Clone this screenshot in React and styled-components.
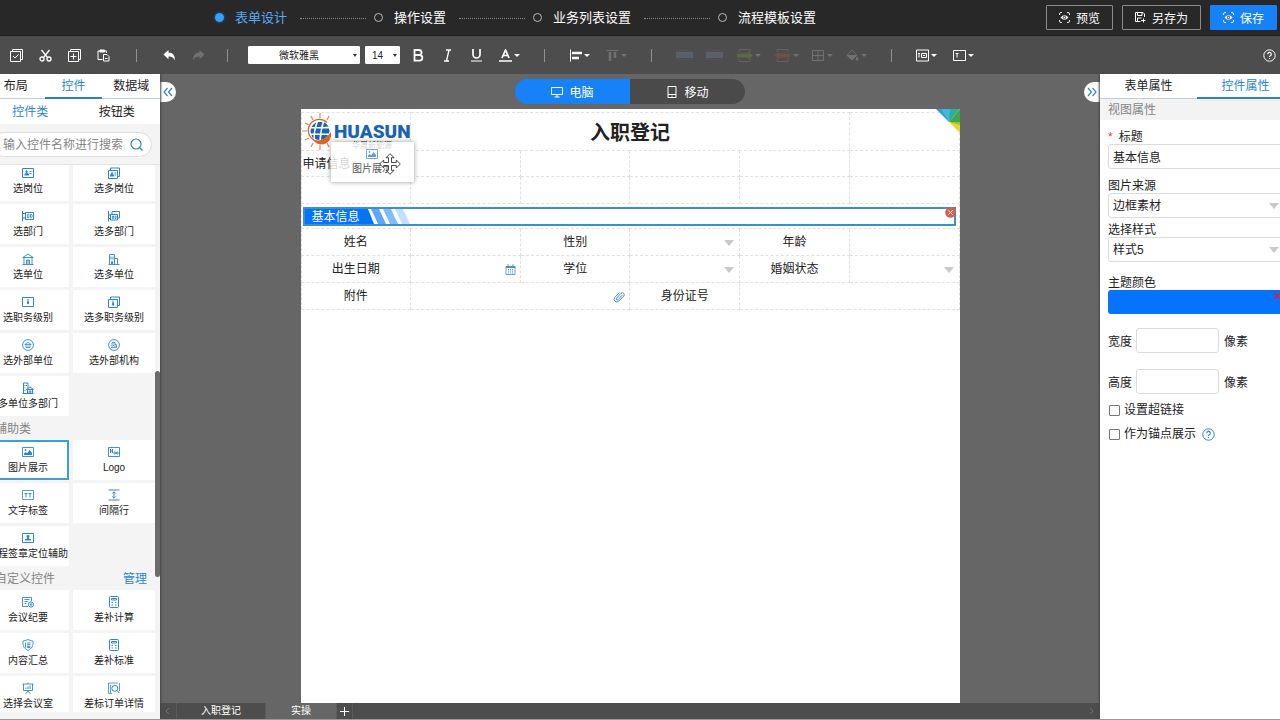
import styled, { createGlobalStyle, css } from "styled-components"

const GlobalStyle = createGlobalStyle`
  * {
    box-sizing: border-box;
  }

  body {
    margin: 0;
  }

  body, button, input, select {
    font-family: "Liberation Sans", "Noto Sans CJK SC", sans-serif;
    font-size: 12px;
    color: #222;
  }

  button {
    padding: 0;
    border: none;
    background: none;
    cursor: pointer;
  }

  svg {
    display: block;
    flex-shrink: 0;
  }
`

const Page = styled.div`
  height: 100vh;
  min-height: 480px;
  display: flex;
  flex-direction: column;
  overflow: hidden;
  background-color: #666;
  border-bottom: 1px solid #999;
`

/* ---------- top bar ---------- */

const TopBar = styled.header`
  height: 36px;
  flex-shrink: 0;
  display: flex;
  align-items: center;
  justify-content: space-between;
  padding: 0 3px 0 215px;
  background-color: #282828;
  border-bottom: 1px solid #1d1d1d;
`

const Steps = styled.nav`
  display: flex;
  align-items: center;
`

const Step = styled.a`
  display: flex;
  align-items: center;
  gap: 11px;
  font-size: 13px;
  line-height: 20px;
  white-space: nowrap;
  text-decoration: none;
  color: ${(props) => (props.$active ? "#57a9f5" : "#fff")};
`

const StepDot = styled.span`
  width: 9px;
  height: 9px;
  border-radius: 50%;
  border: 1px solid #bbb;
  ${(props) =>
    props.$active &&
    css`
      border-color: #37a0f8;
      background-color: #37a0f8;
      box-shadow: 0 0 3px #1b6fc0;
    `}
`

const StepLine = styled.span`
  width: 66px;
  margin: 2px 8px 0 13px;
  border-top: 1px dotted #8a8a8a;
`

const Actions = styled.div`
  display: flex;
  gap: 9px;
`

const ActionButton = styled.button`
  height: 25px;
  display: flex;
  align-items: center;
  gap: 6px;
  padding: 0 12px;
  border: 1px solid ${(props) => (props.$primary ? "#1782f7" : "#8c8c8c")};
  border-radius: 1px;
  background-color: ${(props) => (props.$primary ? "#1782f7" : "transparent")};
  color: #fff;
  white-space: nowrap;
`

/* ---------- toolbar ---------- */

const Toolbar = styled.div`
  height: 38px;
  flex-shrink: 0;
  display: flex;
  align-items: center;
  padding: 0 4px 0 10px;
  background-color: #4d4d4d;
`

const ToolGroup = styled.div`
  display: flex;
  align-items: center;
  gap: ${(props) => props.$gap || 16}px;
`

const Divider = styled.span`
  width: 1px;
  height: 13px;
  margin: 0 ${(props) => props.$gap || 24}px;
  background-color: #919191;
`

const Tool = styled.button`
  display: flex;
  align-items: center;
  gap: 2px;
  color: #fff;
  opacity: ${(props) => (props.$dim ? 0.2 : 1)};
`

const Caret = styled.span`
  border: 3px solid transparent;
  border-top-color: currentColor;
  border-bottom: none;
`

const FontBox = styled.div`
  position: relative;
  width: ${(props) => (props.$small ? 35 : 112)}px;
  margin-right: ${(props) => (props.$small ? 12 : 5)}px;
  margin-left: ${(props) => (props.$small ? 0 : -2)}px;

  &::after {
    content: "";
    position: absolute;
    top: 8px;
    right: 3px;
    border: 2px solid transparent;
    border-top: 3px solid #333;
    border-bottom: none;
    pointer-events: none;
  }

  select {
    appearance: none;
    display: block;
    width: 100%;
    height: 18px;
    padding: 0 10px 0 0;
    border: 1px solid #fff;
    border-radius: 1px;
    background-color: #fff;
    font-size: 10px;
    text-align: center;
    text-align-last: center;
  }
`

const HelpTool = styled(Tool)`
  margin-left: auto;
`

/* ---------- body ---------- */

const Body = styled.div`
  flex: 1;
  min-height: 0;
  display: grid;
  grid-template-columns: 160px 1fr 180px;
`

const Sidebar = styled.aside`
  position: relative;
  z-index: 1;
  min-height: 0;
  display: flex;
  justify-content: flex-end;
  overflow: hidden;
  background-color: #f4f4f4;
  box-shadow: 1px 0 2px #444;
`

const SidebarInner = styled.div`
  width: 173px;
  flex-shrink: 0;
  display: flex;
  flex-direction: column;
`

const Tabs = styled.div`
  height: 25px;
  flex-shrink: 0;
  display: flex;
  background-color: #fff;
  border-bottom: 1px solid #b9cfe0;
`

const Tab = styled.button`
  flex: 1;
  height: 25px;
  line-height: 24px;
  border-bottom: 2px solid ${(props) => (props.$active ? "#2d80c2" : "transparent")};
  color: ${(props) => (props.$active ? "#2d85cc" : "#222")};
`

const SubTabs = styled(Tabs)`
  border-bottom: none;
`

const SubTab = styled(Tab)`
  border-bottom: none;
  line-height: 27px;
`

const SearchArea = styled.div`
  height: 41px;
  flex-shrink: 0;
  padding: 8px 8px 0 4px;
  border-bottom: 1px solid #e2e2e2;
`

const SearchBox = styled.div`
  height: 25px;
  display: flex;
  align-items: center;
  padding: 0 8px 0 11px;
  border: 1px solid #ddd;
  border-radius: 13px;
  background-color: #fff;
  color: #2d85cc;

  input {
    flex: 1;
    min-width: 0;
    height: 20px;
    padding: 0;
    border: none;
    outline: none;
    background: none;
  }

  input::placeholder {
    color: #858585;
  }
`

const Controls = styled.div`
  flex: 1;
  min-height: 0;
  margin-bottom: 7px;
  overflow: hidden;
`

const Tiles = styled.div`
  display: grid;
  grid-template-columns: 82px 82px;
  gap: 3px 4px;

  ${Controls} > &:first-child {
    margin-top: -4px;
  }
`

const Tile = styled.button`
  height: 40px;
  display: flex;
  flex-direction: column;
  align-items: center;
  gap: 2px;
  padding: ${(props) => (props.$active ? 4 : 6)}px 0 0;
  border: ${(props) => (props.$active ? "2px solid #3c9fd6" : "none")};
  background-color: #fff;
  color: #2d85cc;

  span {
    font-size: 10px;
    line-height: 15px;
    white-space: nowrap;
    color: #222;
  }
`

const GroupHead = styled.div`
  height: 24px;
  display: flex;
  align-items: center;
  justify-content: space-between;
  padding: 0 13px 2px 8px;
  color: #858585;

  a {
    color: #2d85cc;
    text-decoration: none;
  }
`

const ScrollThumb = styled.span`
  position: absolute;
  top: 46%;
  right: 0;
  width: 5px;
  height: 32%;
  border-radius: 3px;
  background-color: #6b6b6b;
`

/* ---------- canvas ---------- */

const Canvas = styled.main`
  min-width: 0;
  min-height: 0;
  display: flex;
  flex-direction: column;
`

const CanvasHead = styled.div`
  height: 35px;
  flex-shrink: 0;
  display: flex;
  align-items: center;
  justify-content: space-between;
`

const Handle = styled.button`
  width: 16px;
  height: 20px;
  display: grid;
  place-items: center;
  background-color: #fff;
  border-radius: ${(props) => (props.$right ? "10px 0 0 10px" : "0 10px 10px 0")};
  color: #2d85cc;
`

const DeviceSwitch = styled.div`
  display: flex;
  border-radius: 13px;
  overflow: hidden;
`

const Device = styled.button`
  width: 115px;
  height: 25px;
  display: flex;
  align-items: center;
  justify-content: center;
  gap: 6px;
  background-color: ${(props) => (props.$active ? "#1782f7" : "#4a4a4a")};
  color: #fff;
`

const Sheet = styled.section`
  position: relative;
  flex: 1;
  width: 70%;
  min-width: 659px;
  margin: 0 auto;
  padding-top: 3px;
  background-color: #fff;
`

const Corner = styled.svg`
  position: absolute;
  top: 0;
  right: 0;
`

const FormTable = styled.table`
  width: 100%;
  table-layout: fixed;
  border-collapse: collapse;

  td, th {
    padding: 0;
    border: 1px dashed #e0e0e0;
    font-weight: 400;
    line-height: 16px;
    text-align: center;
    vertical-align: middle;
  }
`

const Row = styled.tr`
  height: ${(props) => props.$h || 27}px;
`

const FormTitle = styled.h1`
  margin: 0;
  padding-top: 2px;
  font-size: 20px;
  line-height: 24px;
`

const LeftText = styled.div`
  padding-left: 1px;
  text-align: left;
`

const CellIcon = styled.button`
  display: block;
  margin: 1px 4px 0 auto;
  color: #3f87cc;
`

const Banner = styled.div`
  position: relative;
  height: 19px;
  margin: 0 3px 0 1px;
  display: flex;
  border: 2px solid #3d8fc4;
  background-color: #fff;
  color: #fff;
`

const BannerText = styled.span`
  height: 15px;
  padding-left: 7px;
  width: 62px;
  line-height: 17px;
  text-align: left;
  white-space: nowrap;
  background-color: #0673ff;
`

const RemoveButton = styled.button`
  position: absolute;
  top: -2px;
  right: -2px;
`

const DragGhost = styled.div`
  position: absolute;
  top: 33px;
  left: 30px;
  width: 83px;
  height: 40px;
  display: flex;
  flex-direction: column;
  align-items: center;
  gap: 2px;
  padding-top: 6px;
  background-color: rgba(255, 255, 255, 0.8);
  box-shadow: 0 0 5px rgba(0, 0, 0, 0.4);
  font-size: 10px;
  line-height: 14px;
  color: #5f9fd6;

  span {
    color: #555;
  }
`

const MoveCursor = styled.svg`
  position: absolute;
  top: 11px;
  left: 48px;
`

const SheetTabs = styled.div`
  height: 16px;
  flex-shrink: 0;
  display: flex;
  background-color: #4d4d4d;
`

const SheetTab = styled.button`
  width: ${(props) => props.$w}px;
  height: 16px;
  display: flex;
  align-items: center;
  justify-content: center;
  border-right: 1px solid #5c5c5c;
  background-color: ${(props) => (props.$active ? "#666" : "#4d4d4d")};
  font-size: 10px;
  line-height: 16px;
  color: ${(props) => (props.$muted ? "#707070" : "#fff")};
  margin-left: ${(props) => (props.$end ? "auto" : 0)};
`

/* ---------- properties ---------- */

const Properties = styled(Sidebar)`
  justify-content: flex-start;
  background-color: #fff;
  box-shadow: -1px 0 2px #444;
`

const PropertiesInner = styled.div`
  width: 194px;
  flex-shrink: 0;
`

const SectionTitle = styled.h2`
  margin: 0;
  height: 21px;
  padding-left: 8px;
  background-color: #f3f3f3;
  font-size: 12px;
  font-weight: 400;
  line-height: 23px;
  color: #858585;
`

const Form = styled.form`
  padding: 8px;
`

const Field = styled.div`
  display: flex;
  flex-direction: column;
  margin-bottom: ${(props) => props.$mb}px;

  label {
    height: 16px;
    line-height: 18px;
  }
`

const Required = styled.i`
  margin-right: 6px;
  font-style: normal;
  color: #e0433c;
`

const inputStyle = css`
  appearance: none;
  display: block;
  width: 100%;
  height: 25px;
  padding: 0 4px;
  border: 1px solid #dcdcdc;
  border-radius: 3px;
  background-color: #fff;
  outline: none;
`

const Input = styled.input`
  ${inputStyle}
`

const SelectBox = styled.div`
  position: relative;

  select {
    ${inputStyle}
    ${(props) => props.$plain && "border: none; background: none;"}
  }

  &::after {
    content: "";
    position: absolute;
    top: 10px;
    right: ${(props) => (props.$plain ? 5 : 7)}px;
    border: 5px solid transparent;
    border-top: 6px solid #c9c9c9;
    border-bottom: none;
    pointer-events: none;
  }
`

const ColorBar = styled.button`
  height: 24px;
  display: flex;
  justify-content: flex-end;
  padding: 2px 5px;
  border-radius: 3px;
  background-color: #0673ff;
`

const SizeRows = styled.div`
  display: grid;
  gap: 16px;
  margin-bottom: 8px;
`

const SizeRow = styled.div`
  display: flex;
  align-items: center;
  gap: 4px;

  input {
    width: 83px;
    margin-right: 1px;
  }
`

const CheckRow = styled.div`
  display: flex;
  align-items: center;
  height: 16px;
  margin-bottom: 8px;

  label {
    display: flex;
    align-items: center;
    line-height: 16px;
  }

  input {
    appearance: none;
    width: 11px;
    height: 11px;
    margin: 0 4px 0 1px;
    border: 1px solid #777;
    border-radius: 1px;
  }
`

const HelpButton = styled.button`
  margin-left: 6px;
  color: #2d85cc;
`

/* ---------- icons ---------- */

const Icon = ({ children, size = 12, sw = 1 }) => (
  <svg
    width={size}
    height={size}
    viewBox={`0 0 ${size} ${size}`}
    fill="none"
    stroke="currentColor"
    strokeWidth={sw}
    aria-hidden="true"
  >
    {children}
  </svg>
)

const icons = {
  post: <><path d="M.5 1.500h11v9H.5zM7.500 4.500h2M7.500 6.500h2" /><path d="M4.500 3l1.300 1.500L5.300 6l1.700.7V8.500H2.500V6.700L4 6l-.6-1.500z" fill="currentColor" stroke="none" /></>,
  posts: <><path d="M.5 3.500h9v8h-9zM2.500 3V1h9v8.500H10M6.500 6h1.500M6.500 8h1.500" /><path d="M4 4.800l1 1.300-.3 1 1.300.7v1.700H2V7.800l1.300-.7-.3-1z" fill="currentColor" stroke="none" /></>,
  dept: <><path d="M.5 1v10.500M.5 3.500h3M3.500 2.500h8v7h-8zM.5 8h3" /><path d="M5.500 4.500h1.500v3H5.500zM8.500 4.500h1.500v3H8.500z" strokeWidth=".8" /></>,
  depts: <><path d="M.5 1v10.500M.5 5h2M2.500 4.500h7v5.500h-7zM.5 8.500h2M4 4V1.500h7.500v6.500H10" /><path d="M4.500 6h1v2.500h-1zM7 6h1v2.500H7z" strokeWidth=".8" /></>,
  unit: <path d="M.8 4.500L6 1l5.200 3.500zM2 4.500V11M10 4.500V11M.5 11.500h11M4.500 11V7h3v4M6 7v4" strokeWidth=".9" />,
  units: <path d="M1.500 11V1.500h5V11M6.500 5.500h3V11M.5 11.500h11M3 3.500v3M5 3.500v3M3.500 11V8.500h1V11" strokeWidth=".9" />,
  level: <><path d="M.5 1.500h11v9H.5z" /><path d="M5.300 3h1.400L6.400 4.200l.9 3L6 8.500 4.700 7.200l.9-3z" fill="currentColor" stroke="none" /></>,
  levels: <><path d="M.5 3.500h9v8h-9zM2.500 3V1h9v8.500H10" /><path d="M4.300 4.800h1.400L5.400 6l.9 2.500L5 10 3.700 8.500 4.600 6z" fill="currentColor" stroke="none" /></>,
  outUnit: <><circle cx="6" cy="6" r="5.400" strokeWidth=".9" /><path d="M2.800 5.500L6 3.300l3.200 2.200zM4 5.500v3h4v-3M6 6.500v2" strokeWidth=".8" /></>,
  outOrg: <><circle cx="6" cy="6" r="5.400" strokeWidth=".9" /><path d="M4 8.500v-5h3v5M7 5.500h1.500v3M3.300 8.600h5.600M5 5h1M5 6.500h1" strokeWidth=".8" /></>,
  multi: <><path d="M1.500 11V1h4.500V6M.5 11.500h11M3 3v1M4.500 3v1M3 5.500v1M3 8v1" /><path d="M4.500 7.500L8 5 11.500 7.500zM5.500 8v3M10.500 8v3M7.200 11V9h1.600v2" /></>,
  image: <><path d="M.5 1.500h11v9H.5z" strokeWidth=".9" /><path d="M2 9V7.500L3.800 6l1.400 1.200L7.500 4l2.500 3v2z" fill="currentColor" stroke="none" /><circle cx="3.500" cy="4" r=".9" fill="currentColor" stroke="none" /></>,
  logo: <><path d="M.5 1.500h11v9H.5z" strokeWidth=".9" /><path d="M2.500 3v4M2.500 5h2M4.500 3v4" /><circle cx="6.800" cy="7" r="1" /><circle cx="9.300" cy="7" r="1" /></>,
  text: <><path d="M.5 1.500h11v9H.5z" strokeWidth=".8" /><path d="M2.500 4.500h3M4 4.500v4M6.500 4.500h3M8 4.500v4" strokeWidth=".9" /></>,
  gap: <path d="M.5 1h11M.5 11h11M6 3v6M4.300 4.500L6 2.800l1.700 1.700M4.300 7.500L6 9.200l1.700-1.700" />,
  seal: <><path d="M.5 1.500h11v9H.5z" /><path d="M6 3a1.500 1.500 0 0 1 .8 2.800L7 6.500l2 .8v1.200H3V7.300l2-.8.200-.7A1.500 1.500 0 0 1 6 3z" fill="currentColor" stroke="none" /></>,
  minutes: <><path d="M6 10.500H.5v-9h9V5M2.500 3.500h5M2.500 5.500h3M2.500 7.500h2" strokeWidth=".9" /><circle cx="9" cy="8.500" r="2.600" /><circle cx="9" cy="8.500" r=".8" /></>,
  calc: <><rect x="1.500" y=".5" width="9" height="11" rx="1" /><path d="M3.500 2.500h5v1.500h-5zM3.500 6.500h1.500M7 6.500h1.500M3.500 9h1.500M7 9h1.500" /></>,
  shield: <path d="M6 .6L11 2.200c.3 4.300-1 7.600-5 9.200C2 9.800.7 6.500 1 2.200zM3.500 3.500v5M5 4h3.500M5 5.700h3.500M5.500 7.300h2.500v1.200H5.500z" strokeWidth=".9" />,
  room: <path d="M.5 2h11M1.500 2v6.500h9V2M6 .5V2M6 8.500v1.500M3.500 11.500L6 9.500l2.500 2M4 7V5.500M6 7V4.500M8 7V3.500" strokeWidth=".9" />,
  order: <><path d="M2.500 11.500h-2V1h9.500M4 11.500h-1.500V3M11.500 9V1" strokeWidth=".8" /><circle cx="6.800" cy="6.300" r="3" /><path d="M9 8.500l2.300 2.500" /></>,
}

const CaretTool = ({ label, dim, children }) => (
  <Tool type="button" aria-label={label} $dim={dim}>
    {children}
    <Caret />
  </Tool>
)

const Scan = () => (
  <Icon size={11}>
    <path d="M.5 3V2A1.500 1.500 0 0 1 2 .5h1M8 .5h1A1.500 1.500 0 0 1 10.500 2v1M10.500 8v1A1.500 1.500 0 0 1 9 10.500H8M3 10.500H2A1.500 1.500 0 0 1 .5 9V8" strokeWidth=".9" />
    <path d="M1.500 5.500Q5.500 1 9.500 5.500 5.500 10 1.500 5.500z" fill="currentColor" stroke="none" />
    <circle cx="5.500" cy="5.500" r="1.200" stroke="#333" />
  </Icon>
)

const SaveAs = () => (
  <Icon size={11}>
    <path d="M5.500 9.500h-5v-9h7.500l1.500 1.500V5M2.500.5v3h4.500v-3M2.500 9V6h4M6 8.500h4.500M8.500 6.500v4" />
  </Icon>
)

const Help = () => (
  <Icon size={13}>
    <circle cx="6.500" cy="6.500" r="5.700" />
    <path d="M4.700 5.200a1.800 1.800 0 1 1 2.600 1.600c-.6.300-.8.600-.8 1.300M6.500 9v1.100" strokeWidth="1.100" />
  </Icon>
)

const Chevrons = ({ right }) => (
  <Icon size={10} sw={1.2}>
    <path d={right ? "M1 1l3.500 4L1 9M5.500 1L9 5 5.500 9" : "M4.500 1L1 5l3.500 4M9 1L5.500 5 9 9"} />
  </Icon>
)

const MergeIcon = ({ split }) => (
  <svg width="17" height="12" viewBox="0 0 17 12" aria-hidden="true">
    <path d="M1 3V1.500h15V3M1 9v1.500h15V9" fill="none" stroke="#777" strokeDasharray="2 1" />
    <path d="M0 3h17v6H0z" fill="#8fb4f0" />
    <path d={split ? "M2 6h3M7 6h3M12 6h3" : "M2 6h4M11 6h4M8.500 4.500v3"} stroke="#999" />
  </svg>
)

const ArrowBlock = ({ color, flip }) => (
  <svg width="17" height="13" viewBox="0 0 17 13" aria-hidden="true">
    <path d="M3 3V.5h11V3M3 10v2.500h11V10" fill="none" stroke="#bbb" />
    <path d={flip ? "M0 6.500L5 2.500v2h11v4H5v2z" : "M17 6.500l-5-4v2H1v4h11v2z"} fill={color} />
  </svg>
)

const Logo = () => (
  <svg width="108" height="37" viewBox="0 0 108 37" role="img" aria-label="HUASUN 华晟新能源">
    <g stroke="#e08a4a" strokeWidth="1.200">
      <path d="M18 0v5M9 3l2 4M27 3l-2 4M3 10l4 2M0 18h5M3 27l4-2M9 34l2-4M18 37v-5M27 34l-2-4" />
    </g>
    <path d="M25 9.500A11 11 0 1 0 12 27" fill="none" stroke="#d9652c" strokeWidth="1.300" />
    <g fill="#1b66b0">
      <path d="M14 9.500q-3 1.500-4.500 4.500h3.300zM16 9h4.500l-1.500 5h-4.500zM22 9.300q3 1.200 4.500 4.200l-5.500.5z" />
      <path d="M9 15.500h3.500l-1 5H9q-1-2.500 0-5zM14 15.500h5l-1 5h-5zM20.500 15.500H27q1 2.500 0 5h-7.500z" />
      <path d="M9.500 22h2v3.500Q10 24 9.500 22zM13 22h4.800l-.5 5q-2.500 0-4.300-1.200zM19.500 22h6.500q-2 4-7 5z" />
    </g>
    <path d="M10 26q10 5 19-7 1 11-9 12.500-6 0-10-5.500z" fill="#d9652c" />
    <text x="32" y="25" fontFamily="Roboto, sans-serif" fontWeight="900" fontSize="19" fill="#1763b5">HUASUN</text>
    <text x="50" y="35" fontFamily="Noto Sans CJK SC, sans-serif" fontSize="8" fill="#222">华晟新能源</text>
  </svg>
)

/* ---------- data ---------- */

const steps = ["表单设计", "操作设置", "业务列表设置", "流程模板设置"]

const orgTiles = [
  ["选岗位", "post"],
  ["选多岗位", "posts"],
  ["选部门", "dept"],
  ["选多部门", "depts"],
  ["选单位", "unit"],
  ["选多单位", "units"],
  ["选职务级别", "level"],
  ["选多职务级别", "levels"],
  ["选外部单位", "outUnit"],
  ["选外部机构", "outOrg"],
  ["多单位多部门", "multi"],
]

const assistTiles = [
  ["图片展示", "image"],
  ["Logo", "logo"],
  ["文字标签", "text"],
  ["间隔行", "gap"],
  ["流程签章定位辅助", "seal"],
]

const customTiles = [
  ["会议纪要", "minutes"],
  ["差补计算", "calc"],
  ["内容汇总", "shield"],
  ["差补标准", "calc"],
  ["选择会议室", "room"],
  ["差标订单详情", "order"],
]

const TileList = ({ items, active }) => (
  <Tiles>
    {items.map(([name, icon]) => (
      <Tile key={name} type="button" $active={name === active}>
        <Icon>{icons[icon]}</Icon>
        <span>{name}</span>
      </Tile>
    ))}
  </Tiles>
)

const EditorToolbar = () => (
  <Toolbar>
    <ToolGroup>
      <Tool type="button" aria-label="全选">
        <Icon size={13}><path d="M.5 2.500h10v10H.5zM2.500 2V.5h10v10H11M3 7l2 2 3.500-3.500" /></Icon>
      </Tool>
      <Tool type="button" aria-label="剪切">
        <Icon size={13} sw={1.3}><circle cx="3" cy="10" r="2" /><circle cx="10" cy="10" r="2" /><path d="M2.500 1l6 7.500M10.500 1l-6 7.500" /></Icon>
      </Tool>
      <Tool type="button" aria-label="复制">
        <Icon size={13}><path d="M.5 2.500h10v10H.5zM2.500 2V.5h10v10H11M5.500 4.500v6M2.500 7.500h6" /></Icon>
      </Tool>
      <Tool type="button" aria-label="粘贴">
        <Icon size={13}><path d="M5.500 10.500H1v-8.500h8.500V4" /><path d="M3 1h4.500v2H3z" fill="currentColor" /><path d="M6.500 5.500h3.500l2 2v4.500H6.500zM8 9.500h2.500" /></Icon>
      </Tool>
    </ToolGroup>
    <Divider $gap={26} />
    <ToolGroup>
      <Tool type="button" aria-label="撤销">
        <Icon size={13}><path d="M5.500 1v2.500q6.500 0 6.500 8-2-4.300-6.500-4v2.700L.5 5.500z" fill="currentColor" stroke="none" /></Icon>
      </Tool>
      <Tool type="button" aria-label="重做" $dim>
        <Icon size={13}><path d="M7.500 1v2.500q-6.500 0-6.500 8 2-4.300 6.500-4v2.700l5-4.700z" fill="currentColor" stroke="none" /></Icon>
      </Tool>
    </ToolGroup>
    <Divider $gap={22} />
    <FontBox>
      <select aria-label="字体" defaultValue="微软雅黑"><option>微软雅黑</option></select>
    </FontBox>
    <FontBox $small>
      <select aria-label="字号" defaultValue="14"><option>14</option></select>
    </FontBox>
    <ToolGroup>
      <Tool type="button" aria-label="加粗">
        <Icon size={13} sw={1.8}><path d="M2.500 1h4.500a2.400 2.400 0 0 1 0 5H2.500zM2.500 6h5a2.800 2.800 0 0 1 0 5.700h-5z" /></Icon>
      </Tool>
      <Tool type="button" aria-label="斜体">
        <Icon size={13} sw={1.3}><path d="M5 1h5M3 12h5M8 1L5.500 12" /></Icon>
      </Tool>
      <Tool type="button" aria-label="下划线">
        <Icon size={13}><path d="M3 0v5.500a3.500 3.500 0 0 0 7 0V0" strokeWidth="1.700" /><path d="M1 12h11" /></Icon>
      </Tool>
      <CaretTool label="文字颜色">
        <Icon size={13}><path d="M3 9L6.500 1 10 9M4.200 6.500h4.600" strokeWidth="1.700" /><path d="M0 12h13" strokeWidth="1.500" /></Icon>
      </CaretTool>
    </ToolGroup>
    <Divider />
    <ToolGroup>
      <CaretTool label="水平对齐">
        <Icon size={13}><path d="M1.500.5v12" /><path d="M3 4h10M3 9h7" strokeWidth="2.500" /></Icon>
      </CaretTool>
      <CaretTool label="垂直对齐" dim>
        <Icon size={13}><path d="M.5 1.500h12" /><path d="M4 3v9M9 3v6" strokeWidth="2.500" /></Icon>
      </CaretTool>
    </ToolGroup>
    <Divider />
    <ToolGroup $gap={13}>
      <Tool type="button" aria-label="合并单元格" $dim><MergeIcon /></Tool>
      <Tool type="button" aria-label="拆分单元格" $dim><MergeIcon split /></Tool>
      <CaretTool label="插入" dim><ArrowBlock color="#8edb2f" /></CaretTool>
      <CaretTool label="删除" dim><ArrowBlock color="#ff5148" flip /></CaretTool>
      <CaretTool label="边框" dim>
        <Icon size={13}><path d="M.5 1.500h11v10H.5zM6 1.500v10M.5 6.500h11" /></Icon>
      </CaretTool>
      <CaretTool label="填充" dim>
        <Icon size={13}><path d="M6 1L1 6.500l5 4.500 4.500-5z" /><path d="M1.500 6.500h9L6 11zM11 8l1.300 3H10z" fill="currentColor" /></Icon>
      </CaretTool>
    </ToolGroup>
    <Divider />
    <ToolGroup>
      <CaretTool label="控件布局">
        <Icon size={13}><path d="M.5 1h12v11H.5zM5.500 4.500h5v4h-5zM7 6.500h2" /><path d="M2 4.500h2M3 4.500v4" /></Icon>
      </CaretTool>
      <CaretTool label="文字布局">
        <Icon size={13}><path d="M.5 1.500h12v10H.5zM2.500 4.500h3M4 4.500v4" /></Icon>
      </CaretTool>
    </ToolGroup>
    <HelpTool type="button" aria-label="帮助"><Help /></HelpTool>
  </Toolbar>
)

const CellSelect = ({ label }) => (
  <SelectBox $plain>
    <select aria-label={label}><option></option></select>
  </SelectBox>
)

const RegisterForm = () => (
  <FormTable>
    <colgroup>
      {[1, 2, 3, 4, 5, 6].map((n) => <col key={n} />)}
    </colgroup>
    <tbody>
      <Row $h={38}>
        <td><Logo /></td>
        <td colSpan={4}><FormTitle>入职登记</FormTitle></td>
        <td></td>
      </Row>
      <Row $h={26}>
        <td><LeftText>申请信息</LeftText></td>
        <td></td><td></td><td></td><td></td><td></td>
      </Row>
      <Row><td></td><td></td><td></td><td></td><td></td><td></td></Row>
      <Row $h={25}>
        <td colSpan={6}>
          <Banner>
            <BannerText>基本信息</BannerText>
            <svg width="46" height="15" viewBox="0 0 46 15" aria-hidden="true">
              <path d="M0 0h1l6 15H0z" fill="#0673ff" />
              <path d="M4 0h8l7 15h-8z" fill="#5fa6ff" />
              <path d="M16 0h8l7 15h-8z" fill="#84bbff" />
              <path d="M28 0h8l7 15h-8z" fill="#c3deff" />
            </svg>
            <RemoveButton type="button" aria-label="删除控件">
              <svg width="11" height="11" viewBox="0 0 11 11" aria-hidden="true">
                <circle cx="5.500" cy="5.500" r="5.300" fill="#dc5c50" />
                <path d="M3.300 3.300l4.400 4.400M7.700 3.300L3.300 7.700" stroke="#fff" />
              </svg>
            </RemoveButton>
          </Banner>
        </td>
      </Row>
      <Row>
        <th>姓名</th><td></td>
        <th>性别</th><td><CellSelect label="性别" /></td>
        <th>年龄</th><td></td>
      </Row>
      <Row>
        <th>出生日期</th>
        <td>
          <CellIcon type="button" aria-label="选择日期">
            <Icon size={11}><path d="M1 2.500h9v8H1zM3 0v3M8 0v3" strokeWidth=".8" /><path d="M1 3h9" strokeWidth="1.800" /><path d="M3 5.500h1M5 5.500h1M7 5.500h1M3 7.200h1M5 7.200h1M7 7.200h1M3 9h1M5 9h1M7 9h1" strokeWidth=".9" /></Icon>
          </CellIcon>
        </td>
        <th>学位</th><td><CellSelect label="学位" /></td>
        <th>婚姻状态</th><td><CellSelect label="婚姻状态" /></td>
      </Row>
      <Row>
        <th>附件</th>
        <td colSpan={2}>
          <CellIcon type="button" aria-label="上传附件">
            <Icon size={12}><path d="M9.500 4L5 8.700a1 1 0 0 1-1.500-1.400L8 2.400a1.900 1.900 0 0 1 2.700 2.700L5.500 10.300A2.700 2.700 0 0 1 1.700 6.500L6.500 1.600" /></Icon>
          </CellIcon>
        </td>
        <th>身份证号</th><td colSpan={2}></td>
      </Row>
    </tbody>
  </FormTable>
)

const App = () => {
  return (
    <>
      <GlobalStyle />
      <Page>
        <TopBar>
          <Steps>
            {steps.map((name, i) => [
              i > 0 && <StepLine key={name + "-line"} />,
              <Step key={name} href="#" $active={i === 0}>
                <StepDot $active={i === 0} />
                {name}
              </Step>,
            ])}
          </Steps>
          <Actions>
            <ActionButton type="button"><Scan />预览</ActionButton>
            <ActionButton type="button"><SaveAs />另存为</ActionButton>
            <ActionButton type="button" $primary><Scan />保存</ActionButton>
          </Actions>
        </TopBar>
        <EditorToolbar />
        <Body>
          <Sidebar>
            <SidebarInner>
              <Tabs>
                <Tab type="button">布局</Tab>
                <Tab type="button" $active>控件</Tab>
                <Tab type="button">数据域</Tab>
              </Tabs>
              <SubTabs>
                <SubTab type="button" $active>控件类</SubTab>
                <SubTab type="button">按钮类</SubTab>
              </SubTabs>
              <SearchArea>
                <SearchBox>
                  <input aria-label="搜索控件" placeholder="输入控件名称进行搜索" />
                  <Icon size={13} sw={1.2}><circle cx="6" cy="6" r="5" /><path d="M9.500 9.500l3 3" /></Icon>
                </SearchBox>
              </SearchArea>
              <Controls>
                <TileList items={orgTiles} />
                <GroupHead>辅助类</GroupHead>
                <TileList items={assistTiles} active="图片展示" />
                <GroupHead>自定义控件<a href="#">管理</a></GroupHead>
                <TileList items={customTiles} />
              </Controls>
            </SidebarInner>
            <ScrollThumb />
          </Sidebar>
          <Canvas>
            <CanvasHead>
              <Handle type="button" aria-label="收起控件栏"><Chevrons /></Handle>
              <DeviceSwitch>
                <Device type="button" $active>
                  <Icon size={12}><path d="M.5 1.500h11v7H.5zM6 8.500v2.500M3.500 11h5" /></Icon>
                  电脑
                </Device>
                <Device type="button">
                  <Icon size={12}><path d="M2 .5h8v11H2zM2 8.500h8M5.500 10h1" /></Icon>
                  移动
                </Device>
              </DeviceSwitch>
              <Handle type="button" aria-label="收起属性栏" $right><Chevrons right /></Handle>
            </CanvasHead>
            <Sheet>
              <RegisterForm />
              <Corner width="24" height="24" viewBox="0 0 24 24" aria-hidden="true">
                <path d="M0 0h13v13z" fill="#2f9fdc" />
                <path d="M5 0h11l-3 13z" fill="#45b8d8" />
                <path d="M14 0h10L13 13z" fill="#2fae9a" />
                <path d="M24 0v14l-11-1z" fill="#3fa845" />
                <path d="M24 13v4l-11-4z" fill="#8cc63f" />
                <path d="M24 16v8L13 13z" fill="#ecd32e" />
              </Corner>
              <DragGhost>
                <Icon>{icons.image}</Icon>
                <span>图片展示</span>
                <MoveCursor width="22" height="22" viewBox="0 0 22 22" aria-hidden="true">
                  <path
                    d="M11 .7l4 4h-2.500v4.800h4.800V7l4 4-4 4v-2.500h-4.800v4.800H15l-4 4-4-4h2.500v-4.800H4.700V15l-4-4 4-4v2.500h4.800V4.700H7z"
                    fill="#fff"
                    stroke="#333"
                    strokeWidth=".9"
                  />
                </MoveCursor>
              </DragGhost>
            </Sheet>
            <SheetTabs>
              <SheetTab type="button" $w={17} $muted aria-label="上一页">
                <Icon size={8}><path d="M5 1L2 4l3 3" /></Icon>
              </SheetTab>
              <SheetTab type="button" $w={89}>入职登记</SheetTab>
              <SheetTab type="button" $w={71} $active>实操</SheetTab>
              <SheetTab type="button" $w={16} aria-label="新增页签">
                <Icon size={9}><path d="M4.500 0v9M0 4.500h9" /></Icon>
              </SheetTab>
              <SheetTab type="button" $w={17} $muted $end aria-label="下一页">
                <Icon size={8}><path d="M3 1l3 3-3 3" /></Icon>
              </SheetTab>
            </SheetTabs>
          </Canvas>
          <Properties>
            <PropertiesInner>
              <Tabs>
                <Tab type="button">表单属性</Tab>
                <Tab type="button" $active>控件属性</Tab>
              </Tabs>
              <SectionTitle>视图属性</SectionTitle>
              <Form>
                <Field $mb={8}>
                  <label htmlFor="title"><Required>*</Required>标题</label>
                  <Input id="title" defaultValue="基本信息" />
                </Field>
                <Field $mb={3}>
                  <label htmlFor="source">图片来源</label>
                  <SelectBox>
                    <select id="source"><option>边框素材</option></select>
                  </SelectBox>
                </Field>
                <Field $mb={12}>
                  <label htmlFor="style">选择样式</label>
                  <SelectBox>
                    <select id="style"><option>样式5</option></select>
                  </SelectBox>
                </Field>
                <Field $mb={14}>
                  <label htmlFor="color">主题颜色</label>
                  <ColorBar id="color" type="button">
                    <Icon size={8} sw={1.5}><path d="M1 1l6 6M7 1L1 7" stroke="#d8203c" /></Icon>
                  </ColorBar>
                </Field>
                <SizeRows>
                  <SizeRow>
                    <label htmlFor="width">宽度</label>
                    <Input id="width" />
                    像素
                  </SizeRow>
                  <SizeRow>
                    <label htmlFor="height">高度</label>
                    <Input id="height" />
                    像素
                  </SizeRow>
                </SizeRows>
                <CheckRow>
                  <label><input type="checkbox" />设置超链接</label>
                </CheckRow>
                <CheckRow>
                  <label><input type="checkbox" />作为锚点展示</label>
                  <HelpButton type="button" aria-label="锚点说明"><Help /></HelpButton>
                </CheckRow>
              </Form>
            </PropertiesInner>
          </Properties>
        </Body>
      </Page>
    </>
  )
}

export default App
